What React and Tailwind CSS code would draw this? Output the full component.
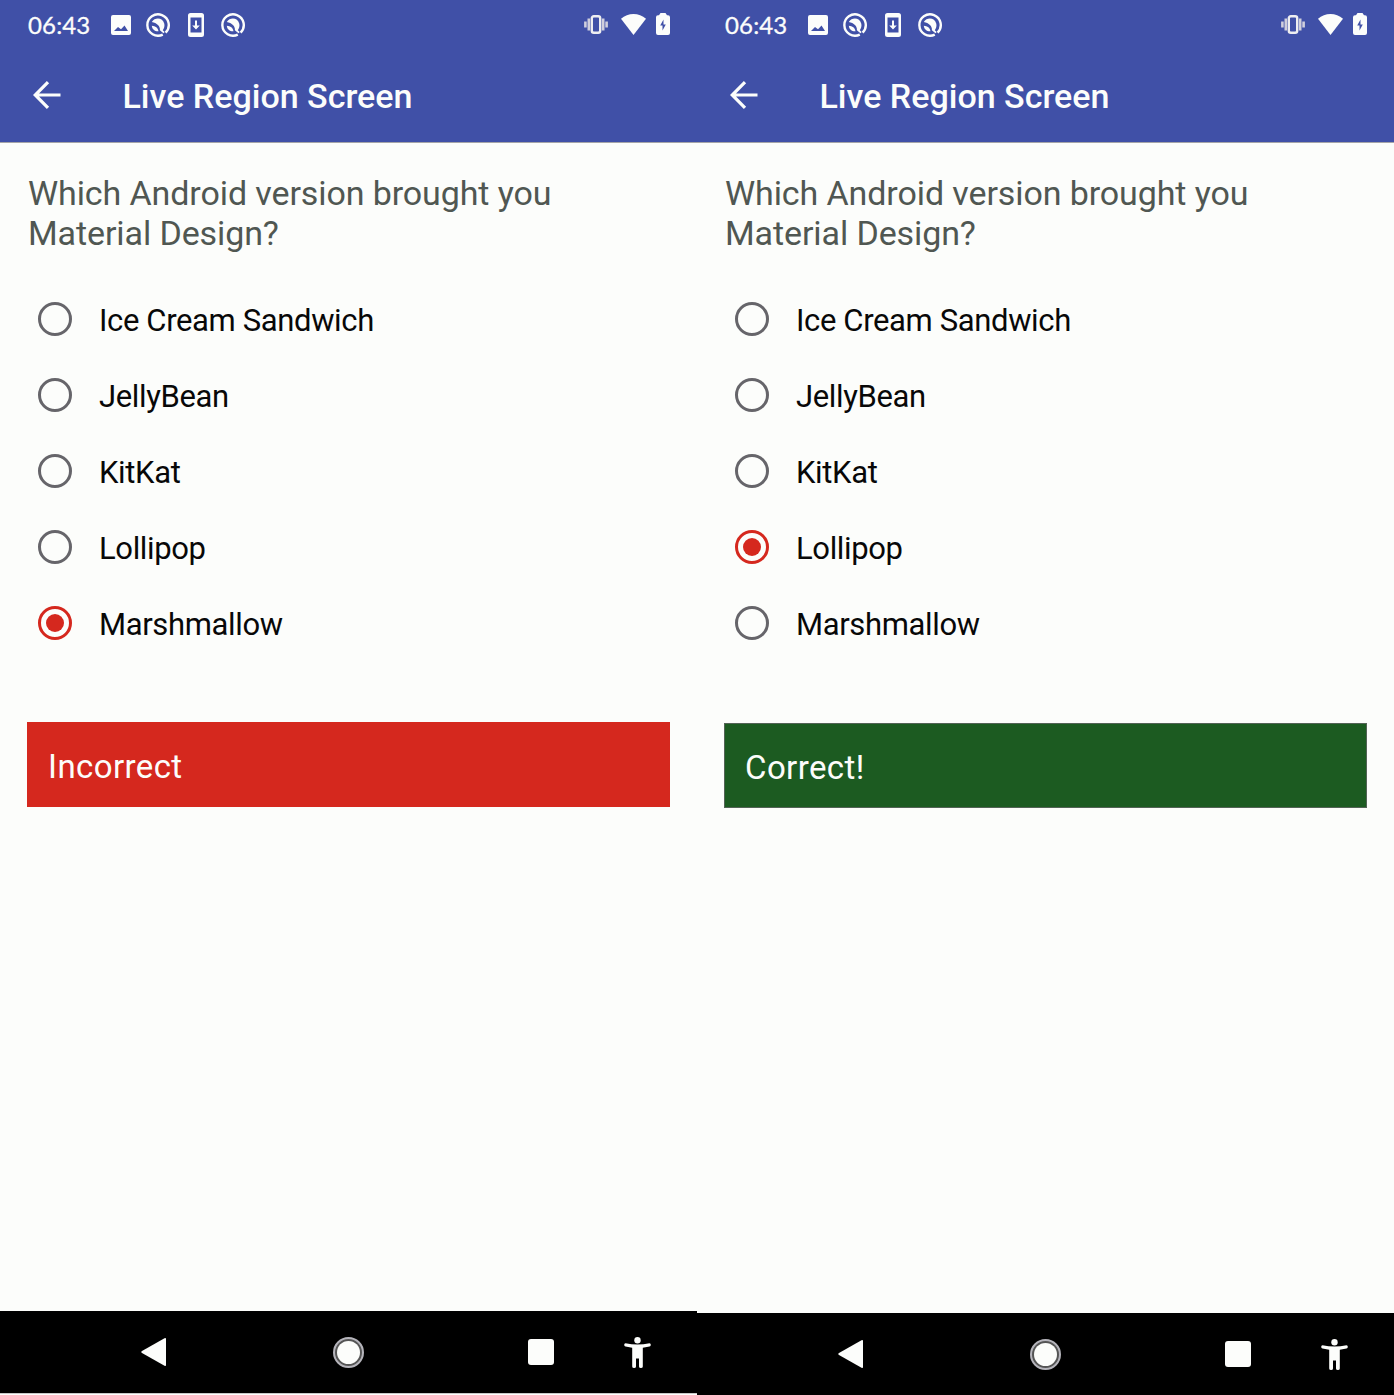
import React from "react";

const VERSIONS = ["Ice Cream Sandwich", "JellyBean", "KitKat", "Lollipop", "Marshmallow"];

function ImageIcon() {
  return (
    <svg className="h-5 w-5" viewBox="0 0 20 20">
      <path fill="#fcfdfb" fillRule="evenodd" d="M2 0h16a2 2 0 0 1 2 2v16a2 2 0 0 1-2 2H2a2 2 0 0 1-2-2V2a2 2 0 0 1 2-2zM3 16h14l-3.500-5.500-3.500 3.800L7 12z" />
    </svg>
  );
}

function DebugIcon() {
  return (
    <svg className="h-6 w-6" viewBox="0 0 24 24" fill="none" stroke="#fcfdfb">
      <path strokeWidth="2.400" d="M16.800 21.600A10.700 10.700 0 1 1 19.600 19.600" />
      <path fill="#fcfdfb" stroke="none" d="M5.800 9C9 3.800 17 4.600 18.300 10.800c.5 2.600-.2 4.600-1.500 6.400l1.900 1.800-1.200 1.200-3.600-3C14.500 13.300 10.800 9.800 5.800 9z" />
      <path fill="#fcfdfb" stroke="none" d="M5.800 12.800c3.600.2 6.200 2.200 6.700 5.500-3.700.2-6.300-1.700-6.700-5.500z" />
    </svg>
  );
}

function PhoneDownloadIcon() {
  return (
    <svg className="h-6 w-4" viewBox="0 0 16 24">
      <path fill="#fcfdfb" fillRule="evenodd" d="M2.500 0h11A2.500 2.500 0 0 1 16 2.500v19a2.500 2.500 0 0 1-2.500 2.500h-11A2.500 2.500 0 0 1 0 21.500v-19A2.500 2.500 0 0 1 2.500 0zM2.500 4.500v15h11v-15z" />
      <path fill="#fcfdfb" d="M7 7.500h2v5h2.800L8 16.600 4.200 12.500H7z" />
    </svg>
  );
}

function VibrateIcon() {
  return (
    <svg className="h-[19px] w-6" viewBox="0 0 24 19">
      <rect x="7.800" y="1.200" width="8.400" height="16.600" rx="2" fill="none" stroke="#eeeef1" strokeWidth="2.400" />
      <path stroke="#d0cfdd" strokeWidth="2.600" d="M4.800 3.500v12M1.400 6.500v6M19.200 3.500v12M22.600 6.500v6" />
    </svg>
  );
}

function WifiIcon() {
  return (
    <svg className="h-[21px] w-[25px]" viewBox="0 0 25 21">
      <path fill="#fcfdfb" d="M0 4.800C7-1.600 18-1.600 25 4.800L12.500 21z" />
    </svg>
  );
}

function BatteryIcon() {
  return (
    <svg className="h-[22px] w-3.5" viewBox="0 0 14 22">
      <path fill="#fcfdfb" fillRule="evenodd" d="M4.500 0h5L11 2.300h1a2 2 0 0 1 2 2V20a2 2 0 0 1-2 2H2a2 2 0 0 1-2-2V4.300a2 2 0 0 1 2-2h1zM7.500 6.500L4.200 12.500h2.300v5l3.300-6H7.500z" />
    </svg>
  );
}

function StatusBar() {
  return (
    <div className="flex h-[50px] items-center pr-[27px] pl-7 text-[#fcfdfb]">
      <span className="w-[83px] font-['Lato',sans-serif] text-[24px] leading-[50px] tracking-[0.15px] [-webkit-text-stroke:0.3px_#fcfdfb]">06:43</span>
      <ImageIcon />
      <div className="ml-[15px] -mt-px"><DebugIcon /></div>
      <div className="ml-[17.500px] -mt-px"><PhoneDownloadIcon /></div>
      <div className="ml-[17px] -mt-px"><DebugIcon /></div>
      <div className="ml-auto -mt-0.5 flex items-center">
        <VibrateIcon />
        <div className="ml-[13px]"><WifiIcon /></div>
        <div className="ml-2.5"><BatteryIcon /></div>
      </div>
    </div>
  );
}

function AppBar() {
  return (
    <div className="flex h-[92px] items-start pl-[33px] text-[#fcfdfb]">
      <svg className="mt-[31px] h-7 w-7" viewBox="0 0 28 28" fill="none" stroke="currentColor" strokeWidth="3.200">
        <path d="M27.500 14H2.500M15 1.200L2.200 14 15 26.800" />
      </svg>
      <h1 className="mt-[26px] ml-[61.500px] text-[34px] leading-10 font-medium whitespace-nowrap">Live Region Screen</h1>
    </div>
  );
}

function Option({ label, checked }) {
  return (
    <label className="flex h-[76px] items-center">
      <span className={checked
        ? "-mt-[3px] flex h-[34px] w-[34px] items-center justify-center rounded-full border-[3px] border-[#d5281e]"
        : "-mt-[3px] flex h-[34px] w-[34px] items-center justify-center rounded-full border-[3px] border-[#66656a]"}>
        {checked && <span className="h-[18px] w-[18px] rounded-full bg-[#d5281e]" />}
      </span>
      <span className="ml-[27px] pt-px text-[31px] leading-10 tracking-[-0.36px] whitespace-nowrap text-[#080808]">{label}</span>
    </label>
  );
}

function NavBar() {
  return (
    <div className="flex h-[82px] items-center bg-black pl-[141px]">
      <svg className="h-7 w-[25px]" viewBox="0 0 25 28">
        <path fill="#fcfdfb" d="M25 1v26q0 1.500-1.500.7L1 15q-1.500-1 0-2L23.500.3Q25-.5 25 1z" />
      </svg>
      <div className="ml-[167px] flex h-[31px] w-[31px] items-center justify-center rounded-full border-2 border-[#b5b4bb] bg-[#555]">
        <div className="h-[23px] w-[23px] rounded-full bg-[#fcfdfb]" />
      </div>
      <div className="ml-[164px] h-[26px] w-[26px] rounded-[3px] bg-[#fcfdfb]" />
      <svg className="ml-[70px] h-[31px] w-[27px]" viewBox="0 0 27 31" fill="#fcfdfb">
        <circle cx="13.500" cy="3.300" r="3.200" />
        <path d="M1.500 6.200Q13.500 9 25.500 6.200q1.300 0 1.300 1.500t-1.300 1.800L18.800 10.800v18.700q0 1.500-1.900 1.500t-1.900-1.500V21.500h-3v8q0 1.500-1.900 1.500t-1.900-1.500V10.800l-6.700-1.300Q.2 9.200.2 7.700t1.300-1.500z" />
      </svg>
    </div>
  );
}

function Phone({ selected, correct }) {
  return (
    <section className={correct ? "flex h-[1395px] w-[697px] flex-col" : "flex h-[1393px] w-[697px] flex-col"}>
      <header className="h-[143px] border-b border-[#a5a5a8] bg-[#4050a7]">
        <StatusBar />
        <AppBar />
      </header>
      <main className="flex flex-1 flex-col px-[27px] pt-[30px]">
        <p className="pl-px text-[34px] leading-10 tracking-[-0.1px] text-[#505752]">
          <span className="whitespace-nowrap">Which Android version brought you</span>
          <br />
          <span className="whitespace-nowrap">Material Design?</span>
        </p>
        <div className={correct ? "mt-[29.500px] pl-[11px]" : "mt-[29px] pl-[11px]"}>
          {VERSIONS.map((name) => (
            <Option key={name} label={name} checked={name === selected} />
          ))}
        </div>
        <div className={correct
          ? "mt-[60.500px] flex h-[85px] items-center border border-[#536356] bg-[#1c5b21] pl-5 text-[33px] tracking-[0.4px] text-[#fcfdfb]"
          : "mt-[60px] flex h-[85px] items-center bg-[#d5281e] pl-[21px] text-[33px] tracking-[0.4px] text-[#fcfdfb]"}>
          <span className="pt-1">{correct ? "Correct!" : "Incorrect"}</span>
        </div>
      </main>
      <NavBar />
    </section>
  );
}

export default function App() {
  return (
    <div className="flex h-[1395px] w-[1394px] items-start overflow-hidden bg-[#fcfdfb] font-['Roboto',sans-serif]">
      <div className="h-[1395px] border-b border-[#fcfdfb] bg-[#c8c8c8]">
        <div className="bg-[#fcfdfb]"><Phone selected="Marshmallow" /></div>
      </div>
      <Phone selected="Lollipop" correct />
    </div>
  );
}
